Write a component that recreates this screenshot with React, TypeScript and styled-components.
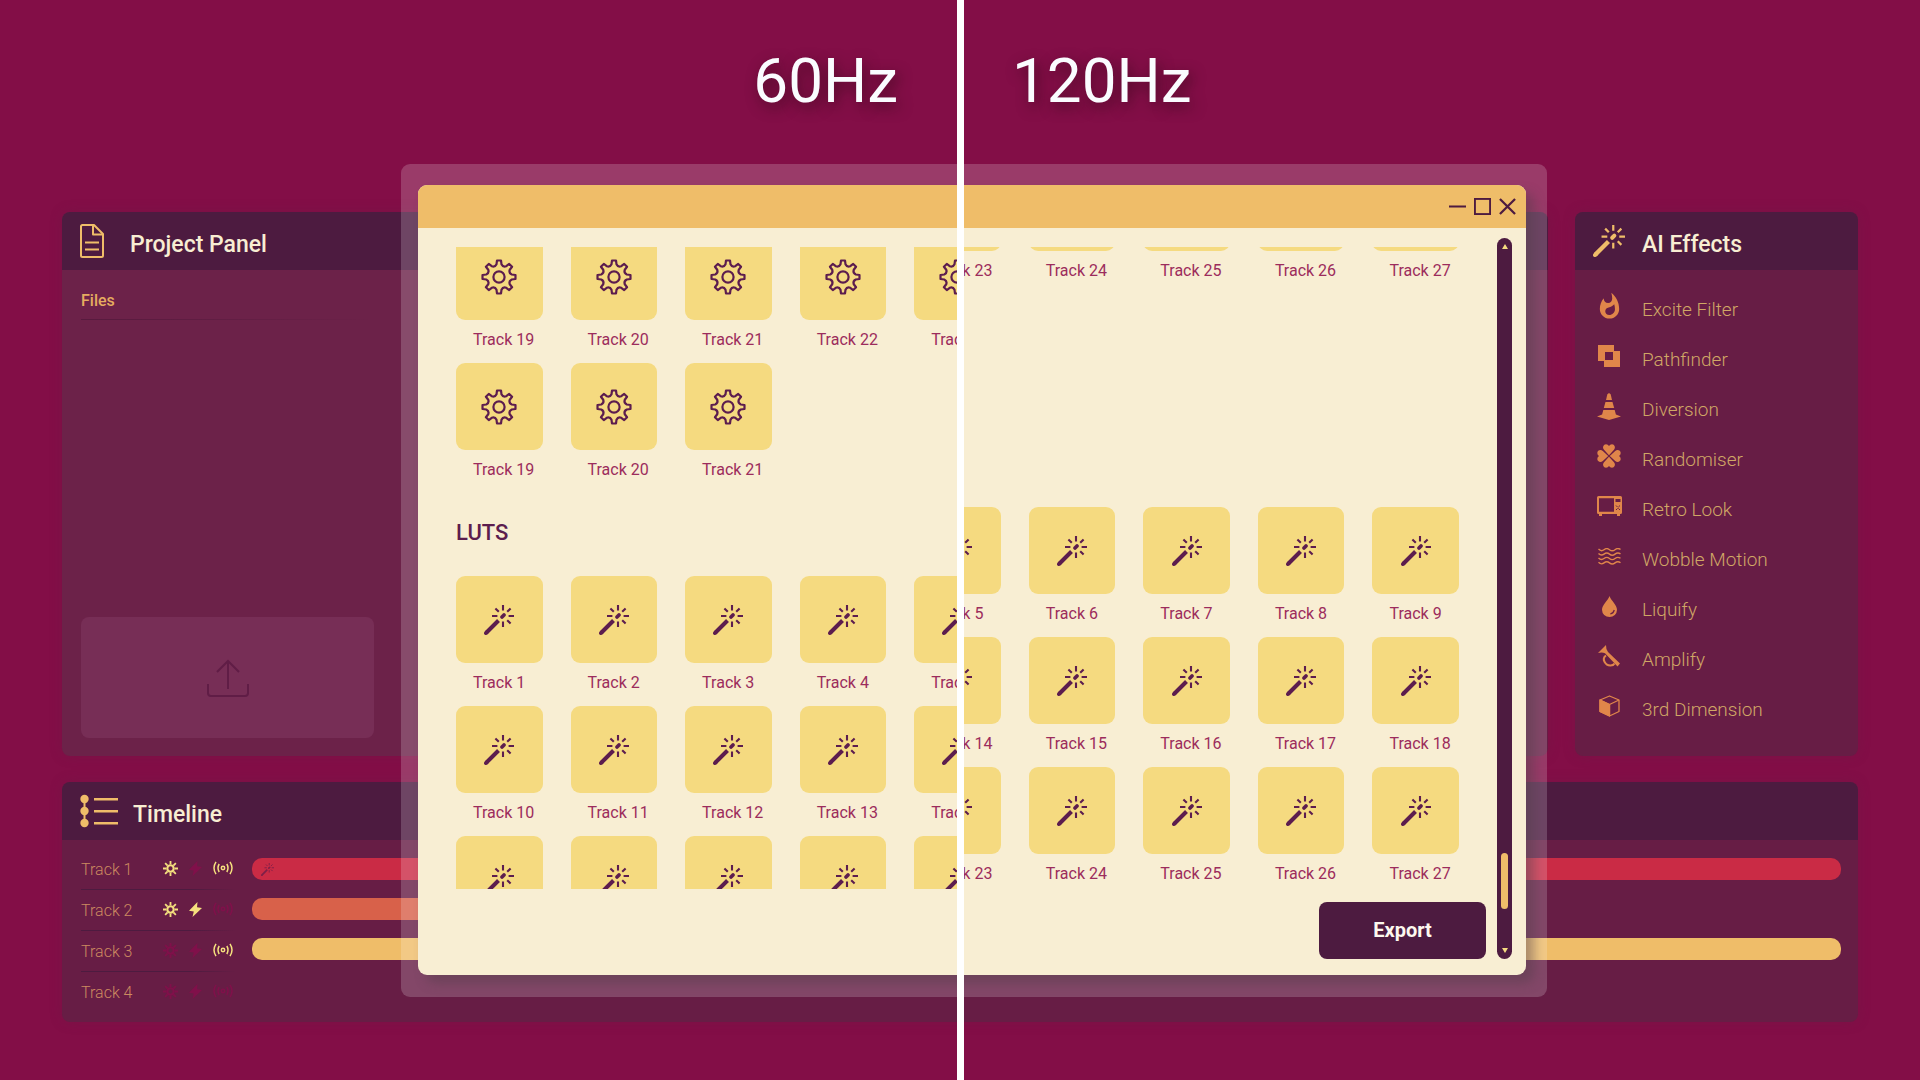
import React from "react";
import styled, { createGlobalStyle, css } from "styled-components";
import { MdWhatshot } from "react-icons/md";

const color = {
  page: "#830e47",
  panel: "#671d45",
  panelLight: "#6c2249",
  header: "#4d1b40",
  cream: "#f8eed3",
  amber: "#efbd69",
  tile: "#f5da80",
  orange: "#e0864a",
  gold: "#d0a765",
  lime: "#f5e07e",
  berry: "#9c2c5c",
  plum: "#5c1d4e",
};

const GlobalStyle = createGlobalStyle`
  *, *::before, *::after { box-sizing: border-box; }
  body {
    margin: 0;
    background: ${color.page};
    font-family: Roboto, "Liberation Sans", sans-serif;
  }
  h1, h2, h3, p, ul { margin: 0; padding: 0; font-weight: inherit; }
  ul { list-style: none; }
`;

/* ---------- page ---------- */

const Page = styled.div`
  position: relative;
  display: flex;
  flex-direction: column;
  min-height: 100vh;
  overflow: hidden;
`;

const Rates = styled.header`
  display: grid;
  grid-template-columns: 1fr 1fr;
  height: 212px;
  padding-top: 41px;
`;

const Rate = styled.p<{ $side: "left" | "right" }>`
  font-size: 62px;
  line-height: 80px;
  color: #fafcff;
  text-shadow: 3px 5px 14px rgba(60, 10, 30, 0.8);
  ${(p) =>
    p.$side === "left"
      ? css`
          text-align: right;
          padding-right: 62px;
        `
      : css`
          padding-left: 52px;
        `}
`;

const Divider = styled.div`
  position: absolute;
  top: 0;
  bottom: 0;
  left: calc(50% - 3px);
  width: 7px;
  background: #ffffff;
`;

const Workspace = styled.main`
  flex: 1;
  display: flex;
  flex-direction: column;
  gap: 26px;
  padding: 0 62px 58px;
`;

const TopRow = styled.div`
  flex: 1;
  display: grid;
  grid-template-columns: 380px 1fr 283px;
  gap: 27px;
`;

const Panel = styled.section<{ $light?: boolean }>`
  display: flex;
  flex-direction: column;
  border-radius: 8px;
  overflow: hidden;
  background: ${(p) => (p.$light ? color.panelLight : color.panel)};
  box-shadow: 0 0 12px rgba(103, 29, 69, 0.35);
`;

const PanelHeader = styled.div<{ $gap: number }>`
  display: flex;
  align-items: center;
  gap: ${(p) => p.$gap}px;
  height: 58px;
  padding: 0 18px;
  background: ${color.header};
  color: ${color.amber};
`;

const PanelTitle = styled.h2`
  padding-top: 8px;
  font-size: 23px;
  font-weight: 500;
  line-height: 28px;
  color: ${color.cream};
`;

/* ---------- project panel ---------- */

const ProjectBody = styled.div`
  flex: 1;
  display: flex;
  flex-direction: column;
  justify-content: space-between;
  padding: 20px 68px 18px 19px;
`;

const FilesHeading = styled.h3`
  padding-bottom: 7px;
  font-size: 16px;
  font-weight: 500;
  line-height: 22px;
  color: #e5ac60;
  border-bottom: 1px solid;
  border-image: linear-gradient(90deg, #571a3e, transparent) 1;
`;

const DropZone = styled.button`
  display: flex;
  align-items: center;
  justify-content: center;
  height: 121px;
  padding: 0;
  border: 0;
  border-radius: 8px;
  background: #772e56;
  color: #601d46;
`;

/* ---------- effects panel ---------- */

const EffectList = styled.ul`
  padding: 14px 18px 22px;
`;

const Effect = styled.li`
  display: flex;
  align-items: center;
  gap: 17px;
  height: 50px;
  font-size: 19px;
  font-weight: 300;
  color: ${color.gold};
`;

const EffectIcon = styled.span`
  display: flex;
  align-items: center;
  justify-content: center;
  width: 32px;
  height: 28px;
  margin-bottom: 6px;
  color: ${color.orange};
`;

/* ---------- timeline ---------- */

const TimelineBody = styled.div`
  display: grid;
  grid-template-columns: 154px 1fr;
  gap: 17px;
  padding: 9px 17px 9px 19px;
`;

const TrackRow = styled.li`
  display: flex;
  align-items: center;
  height: 41px;
  border-bottom: 1px solid;
  border-image: linear-gradient(90deg, #4d1b40 70%, transparent) 1;

  &:last-child {
    border-image: none;
    border-color: transparent;
  }
`;

const TrackName = styled.span`
  width: 82px;
  padding-top: 2px;
  font-size: 16px;
  font-weight: 300;
  line-height: 24px;
  color: #cc8a60;
`;

const TrackToggles = styled.span`
  display: flex;
  align-items: center;
  gap: 11px;
  padding-bottom: 2px;
`;

const Toggle = styled.span<{ $on: boolean }>`
  display: flex;
  justify-content: center;
  color: ${(p) => (p.$on ? color.lime : "#80104a")};
`;

const Bars = styled.div`
  display: flex;
  flex-direction: column;
  gap: 18px;
  padding-top: 9px;
`;

const Bar = styled.div<{ $tone: string; $width?: number }>`
  display: flex;
  align-items: center;
  width: ${(p) => p.$width ?? 100}%;
  height: 22px;
  padding-left: 9px;
  border-radius: 10px;
  background: ${(p) => p.$tone};
  color: #7d2048;
`;

/* ---------- library window ---------- */

const Glass = styled.div`
  position: absolute;
  top: 164px;
  right: 373px;
  bottom: 83px;
  left: 401px;
  display: flex;
  padding: 21px 21px 22px 17px;
  border-radius: 9px;
  background: rgba(255, 255, 255, 0.19);
`;

const Window = styled.section`
  flex: 1;
  display: flex;
  flex-direction: column;
  border-radius: 9px;
  overflow: hidden;
  background: ${color.cream};
  box-shadow: 8px 8px 12px rgba(80, 60, 70, 0.45);
`;

const TitleBar = styled.div`
  display: flex;
  align-items: center;
  justify-content: flex-end;
  gap: 8px;
  height: 43px;
  padding-right: 10px;
  background: ${color.amber};
`;

const WindowButton = styled.button`
  display: flex;
  width: 17px;
  height: 17px;
  padding: 0;
  border: 0;
  background: none;
  color: ${color.header};
`;

const WindowBody = styled.div`
  flex: 1;
  display: flex;
  gap: 11px;
  padding-right: 14px;
`;

const Content = styled.div`
  flex: 1;
  display: flex;
  flex-direction: column;
  gap: 13px;
  padding: 19px 0 16px 38px;
`;

const Viewport = styled.div`
  flex: 1 0 0;
  display: grid;
  grid-template-rows: minmax(0, 1fr);
  margin-right: 27px;
  overflow: hidden;
`;

/* Both refresh-rate views share one cell; each shows its side of the divider. */
const View = styled.div<{ $side: "left" | "right" }>`
  grid-area: 1 / 1;
  overflow: hidden;
  clip-path: ${(p) =>
    p.$side === "left"
      ? "polygon(0 0, calc(50vw - 456px) 0, calc(50vw - 456px) 100%, 0 100%)"
      : "inset(0 0 0 calc(50vw - 456px))"};
`;

const Scrolled = styled.div<{ $top: number }>`
  margin-top: -${(p) => p.$top}px;
`;

const TileGrid = styled.ul<{ $rows: number }>`
  display: grid;
  grid-template-columns: repeat(9, 1fr);
  grid-template-rows: repeat(${(p) => p.$rows}, 130px);
  column-gap: 28px;
`;

const TileItem = styled.li<{ $col: number; $row: number }>`
  grid-column: ${(p) => p.$col};
  grid-row: ${(p) => p.$row};
`;

const TileButton = styled.button`
  display: flex;
  flex-direction: column;
  gap: 10px;
  width: 100%;
  padding: 0;
  border: 0;
  background: none;
  font: inherit;
  text-align: left;
`;

const TileFace = styled.span`
  display: flex;
  align-items: center;
  justify-content: center;
  width: 100%;
  height: 87px;
  border-radius: 9px;
  background: ${color.tile};
  color: ${color.plum};
`;

const TileLabel = styled.span`
  padding-left: 17px;
  font-size: 16px;
  line-height: 20px;
  white-space: nowrap;
  color: ${color.berry};
`;

const GroupHeading = styled.h3<{ $shown: boolean }>`
  padding: 25px 0 28px;
  font-size: 22px;
  font-weight: 500;
  line-height: 30px;
  color: ${color.plum};
  visibility: ${(p) => (p.$shown ? "visible" : "hidden")};
`;

const ExportButton = styled.button`
  align-self: flex-end;
  width: 167px;
  height: 57px;
  padding: 0 0 2px;
  border: 0;
  border-radius: 8px;
  background: ${color.header};
  font-family: inherit;
  font-size: 20px;
  font-weight: 700;
  color: #fdf8ee;
`;

const ScrollTrack = styled.div`
  display: flex;
  flex-direction: column;
  align-items: center;
  justify-content: space-between;
  width: 15px;
  margin: 10px 0 16px;
  padding: 6px 0;
  border-radius: 8px;
  background: ${color.header};
`;

const ScrollRun = styled.div`
  flex: 1;
  display: flex;
  flex-direction: column;
  justify-content: flex-end;
  padding-bottom: 39px;
`;

const ScrollThumb = styled.div`
  width: 7px;
  height: 56px;
  border-radius: 4px;
  background: ${color.amber};
`;

const ScrollArrow = styled.button`
  display: flex;
  padding: 0;
  border: 0;
  background: none;
  color: ${color.tile};
`;

/* ---------- drawings ---------- */

type IconProps = { size?: number };

const Wand = ({ size = 30 }: IconProps) => (
  <svg width={size} height={size} viewBox="0 0 30 30" fill="none" stroke="currentColor">
    <path d="M2 28 14.500 15.500" strokeWidth="4" strokeLinecap="butt" />
    <path d="M1.800 28.200 3 27" strokeWidth="3.600" strokeLinecap="round" />
    <path d="M18 12 20 10" strokeWidth="3.800" strokeLinecap="round" />
    <path
      d="M19 0v5.4M19 16.6V22M8 11h5.4M24.6 11H30M11.4 3.4l3.4 3.4M26.6 3.4l-3.4 3.4M26.6 18.6l-3.4-3.4"
      strokeWidth="2.100"
    />
  </svg>
);

const gearPath = (() => {
  const at = (r: number, deg: number) => {
    const a = (deg * Math.PI) / 180;
    return `${(18 + r * Math.sin(a)).toFixed(2)} ${(18 - r * Math.cos(a)).toFixed(2)}`;
  };
  let d = "";
  for (let i = 0; i < 8; i++) {
    const m = i * 45;
    d += `${i ? "L" : "M"}${at(16.6, m - 7)} L${at(16.6, m + 7)} L${at(13, m + 11)} Q${at(10.4, m + 22.5)} ${at(13, m + 34)} `;
  }
  return d + "Z";
})();

const Gear = () => (
  <svg width="36" height="36" viewBox="0 0 36 36" fill="none" stroke="currentColor" strokeWidth="2.2" strokeLinejoin="round">
    <path d={gearPath} />
    <circle cx="18" cy="18" r="5.6" />
  </svg>
);

const DocumentIcon = () => (
  <svg width="24" height="34" viewBox="0 0 24 34" fill="none" stroke="currentColor" strokeWidth="2" strokeLinejoin="round">
    <path d="M1 2.5Q1 1 2.5 1H14l9 9v21.500Q23 33 21.500 33h-19Q1 33 1 31.500Z" />
    <path d="M13 1.500V10.500h9.500M5 18.500h14M5 25.500h14" />
  </svg>
);

const UploadIcon = () => (
  <svg width="42" height="38" viewBox="0 0 42 38" fill="none" stroke="currentColor" strokeWidth="2">
    <path d="M21 30V3M10 13 21 2l11 11" />
    <path d="M1 25v9q0 3 3 3h34q3 0 3-3v-9" />
  </svg>
);

const TimelineIcon = () => (
  <svg width="38" height="34" viewBox="0 0 38 34" fill="currentColor">
    <rect x="3.500" y="4" width="2" height="26" />
    <circle cx="4.500" cy="5" r="4.200" />
    <circle cx="4.500" cy="17" r="4.200" />
    <circle cx="4.500" cy="29" r="4.200" />
    <path d="M14 4h24v2.400H14zM14 16h24v2.400H14zM14 28h24v2.400H14z" />
  </svg>
);

const Pathfinder = () => (
  <svg width="22" height="22" viewBox="0 0 22 22" fill="currentColor" fillRule="evenodd">
    <path d="M0 0h16v6h6v16H6v-6H0ZM7 7v8h8V7Z" />
  </svg>
);

const Cone = () => (
  <svg width="24" height="27" viewBox="0 0 24 27" fill="currentColor">
    <path d="M10.300 1.500Q12-1 13.700 1.500L15 7H9Z" />
    <path d="M8.500 9h7l1.700 6H6.800Z" />
    <path d="M6.300 17h11.400l1.200 4.500L24 23.500 12 27 0 23.500 5.100 21.500Z" />
  </svg>
);

const Clover = () => (
  <svg width="24" height="24" viewBox="0 0 24 24" fill="currentColor">
    {[0, 90, 180, 270].map((turn) => (
      <path
        key={turn}
        transform={`rotate(${turn} 12 12)`}
        d="M12 11.200 7 5.800C5 3.500 6.500.3 9 .3q2 0 3 1.700Q13 .3 15 .3c2.500 0 4 3.200 2 5.500Z"
      />
    ))}
  </svg>
);

const Microwave = () => (
  <svg width="25" height="20" viewBox="0 0 25 20" fill="currentColor" fillRule="evenodd">
    <path d="M1.500 0h22Q25 0 25 1.500v15q0 1.500-1.500 1.500H23v2h-3v-2H5v2H2v-2h-.5Q0 18 0 16.500v-15Q0 0 1.500 0ZM2 2.200v13.600h15V2.200ZM18.500 3v3h5V3Z" />
    <path d="M19 9.500l1.600 1.600M23 9.500l-1.600 1.600M19 14l1.600-1.600M23 14l-1.600-1.600" stroke={color.panel} strokeWidth="1" />
  </svg>
);

const Waves = () => (
  <svg width="23" height="17" viewBox="0 0 23 17" fill="none" stroke="currentColor" strokeWidth="1.400">
    {[2, 6.4, 10.8, 15.2].map((y) => (
      <path key={y} d={`M.5 ${y - 0.9}q2.750 2.800 5.500.6t5.500 0 5.500 0 5.500-.2`} />
    ))}
  </svg>
);

const Drop = () => (
  <svg width="15" height="21" viewBox="0 0 15 21">
    <path d="M7.500 0C9 4.500 15 9 15 13.800a7.500 7.200 0 0 1-15 0C0 9 6 4.500 7.500 0Z" fill="currentColor" />
    <path d="M12.300 14q-.8 3.200-4 4" fill="none" stroke={color.panel} strokeWidth="1.200" />
  </svg>
);

const Trumpet = () => (
  <svg width="22" height="22" viewBox="0 0 22 22" fill="none" stroke="currentColor">
    <path d="M8 0 0 8q4-1.200 7 .2L19.500 21.500 22 18.500 10 7Q7.800 3.800 8 0Z" fill="currentColor" stroke="none" />
    <path d="M8 10.500q-3.500 2.500-1.500 6.300t6 3.700q3 0 4-2" strokeWidth="2" />
  </svg>
);

const Cube = () => (
  <svg width="21" height="22" viewBox="0 0 21 22" fill="none" stroke="currentColor" strokeWidth="1.300" strokeLinejoin="round">
    <path d="M10.500 1 20 5v11.500L10.500 21 1 16.500V5Z" />
    <path d="M1 5l9.500 4.500L20 5M10.500 9.500V21" />
    <path d="M1 5l9.500 4.500V21L1 16.500Z" fill="currentColor" />
  </svg>
);

const Sun = () => (
  <svg width="15" height="15" viewBox="0 0 14 14" fill="none" stroke="currentColor">
    <circle cx="7" cy="7" r="3" strokeWidth="2" />
    <path d="M7 0v3M7 11v3M0 7h3M11 7h3M2 2l2.300 2.300M9.700 9.700 12 12M12 2 9.700 4.300M4.300 9.700 2 12" strokeWidth="1.700" />
  </svg>
);

const Bolt = () => (
  <svg width="13" height="15" viewBox="0 0 13 15" fill="currentColor">
    <path d="M8.500 0 0 8.700l4.800.8L3.500 15 13 6 8 5.200Z" />
  </svg>
);

const Radio = () => (
  <svg width="20" height="14" viewBox="0 0 20 14" fill="none" stroke="currentColor" strokeWidth="1.500">
    <circle cx="10" cy="7" r="1.700" />
    <path d="M6.200 3q-2.400 4 0 8M13.800 3q2.400 4 0 8M3 .8q-4 6.200 0 12.400M17 .8q4 6.200 0 12.400" />
  </svg>
);

/* ---------- data ---------- */

const effects: [string, React.ReactNode][] = [
  ["Excite Filter", <MdWhatshot size={29} />],
  ["Pathfinder", <Pathfinder />],
  ["Diversion", <Cone />],
  ["Randomiser", <Clover />],
  ["Retro Look", <Microwave />],
  ["Wobble Motion", <Waves />],
  ["Liquify", <Drop />],
  ["Amplify", <Trumpet />],
  ["3rd Dimension", <Cube />],
];

const tracks = [
  { name: "Track 1", on: [true, false, true] },
  { name: "Track 2", on: [true, true, false] },
  { name: "Track 3", on: [false, false, true] },
  { name: "Track 4", on: [false, false, false] },
];

const COLUMNS = 9;

type TileProps = { n: number; col: number; row: number; icon: React.ReactNode };

const Tile = ({ n, col, row, icon }: TileProps) => (
  <TileItem $col={col} $row={row}>
    <TileButton type="button">
      <TileFace>{icon}</TileFace>
      <TileLabel>Track {n}</TileLabel>
    </TileButton>
  </TileItem>
);

type LibraryProps = { side: "left" | "right"; scrollTop: number };

const Library = ({ side, scrollTop }: LibraryProps) => {
  const visible = (col: number) => (side === "left" ? col <= 5 : col >= 5);
  const cols = Array.from({ length: COLUMNS }, (_, i) => i + 1).filter(visible);
  return (
    <View $side={side}>
      <Scrolled $top={scrollTop}>
        <TileGrid $rows={2}>
          {cols.map((c) => (
            <Tile key={c} n={18 + c} col={c} row={1} icon={<Gear />} />
          ))}
          {cols
            .filter((c) => c <= 3)
            .map((c) => (
              <Tile key={`b${c}`} n={18 + c} col={c} row={2} icon={<Gear />} />
            ))}
        </TileGrid>
        <GroupHeading $shown={side === "left"}>LUTS</GroupHeading>
        <TileGrid $rows={3}>
          {[0, 1, 2].flatMap((r) =>
            cols.map((c) => (
              <Tile key={`${r}-${c}`} n={r * COLUMNS + c} col={c} row={r + 1} icon={<Wand />} />
            ))
          )}
        </TileGrid>
      </Scrolled>
    </View>
  );
};

export default function App() {
  return (
    <Page>
      <GlobalStyle />
      <Rates>
        <Rate $side="left">60Hz</Rate>
        <Rate $side="right">120Hz</Rate>
      </Rates>

      <Workspace>
        <TopRow>
          <Panel $light>
            <PanelHeader $gap={26}>
              <DocumentIcon />
              <PanelTitle>Project Panel</PanelTitle>
            </PanelHeader>
            <ProjectBody>
              <FilesHeading>Files</FilesHeading>
              <DropZone type="button" aria-label="Upload">
                <UploadIcon />
              </DropZone>
            </ProjectBody>
          </Panel>

          <Panel>
            <PanelHeader $gap={0} />
          </Panel>

          <Panel>
            <PanelHeader $gap={17}>
              <Wand size={32} />
              <PanelTitle>AI Effects</PanelTitle>
            </PanelHeader>
            <EffectList>
              {effects.map(([name, icon]) => (
                <Effect key={name}>
                  <EffectIcon>{icon}</EffectIcon>
                  {name}
                </Effect>
              ))}
            </EffectList>
          </Panel>
        </TopRow>

        <Panel>
          <PanelHeader $gap={15}>
            <TimelineIcon />
            <PanelTitle>Timeline</PanelTitle>
          </PanelHeader>
          <TimelineBody>
            <ul>
              {tracks.map((t) => (
                <TrackRow key={t.name}>
                  <TrackName>{t.name}</TrackName>
                  <TrackToggles>
                    <Toggle $on={t.on[0]}>
                      <Sun />
                    </Toggle>
                    <Toggle $on={t.on[1]}>
                      <Bolt />
                    </Toggle>
                    <Toggle $on={t.on[2]}>
                      <Radio />
                    </Toggle>
                  </TrackToggles>
                </TrackRow>
              ))}
            </ul>
            <Bars>
              <Bar $tone="#ca2b45">
                <Wand size={13} />
              </Bar>
              <Bar $tone="#d8614a" $width={70} />
              <Bar $tone={color.amber} />
            </Bars>
          </TimelineBody>
        </Panel>
      </Workspace>

      <Glass>
        <Window>
          <TitleBar>
            <WindowButton type="button" aria-label="Minimise">
              <svg width="17" height="17" viewBox="0 0 18 18" stroke="currentColor" strokeWidth="2">
                <path d="M0 9h18" />
              </svg>
            </WindowButton>
            <WindowButton type="button" aria-label="Maximise">
              <svg width="17" height="17" viewBox="0 0 18 18" fill="none" stroke="currentColor" strokeWidth="2">
                <rect x="1" y="1" width="16" height="16" />
              </svg>
            </WindowButton>
            <WindowButton type="button" aria-label="Close">
              <svg width="17" height="17" viewBox="0 0 18 18" stroke="currentColor" strokeWidth="2.400">
                <path d="M1 1 17 17M17 1 1 17" />
              </svg>
            </WindowButton>
          </TitleBar>
          <WindowBody>
            <Content>
              <Viewport>
                <Library side="left" scrollTop={14} />
                <Library side="right" scrollTop={83} />
              </Viewport>
              <ExportButton type="button">Export</ExportButton>
            </Content>
            <ScrollTrack>
              <ScrollArrow type="button" aria-label="Scroll up">
                <svg width="6" height="5" viewBox="0 0 6 5" fill="currentColor">
                  <path d="M3 0 6 5H0Z" />
                </svg>
              </ScrollArrow>
              <ScrollRun>
                <ScrollThumb />
              </ScrollRun>
              <ScrollArrow type="button" aria-label="Scroll down">
                <svg width="6" height="5" viewBox="0 0 6 5" fill="currentColor">
                  <path d="M0 0h6L3 5Z" />
                </svg>
              </ScrollArrow>
            </ScrollTrack>
          </WindowBody>
        </Window>
      </Glass>

      <Divider />
    </Page>
  );
}
